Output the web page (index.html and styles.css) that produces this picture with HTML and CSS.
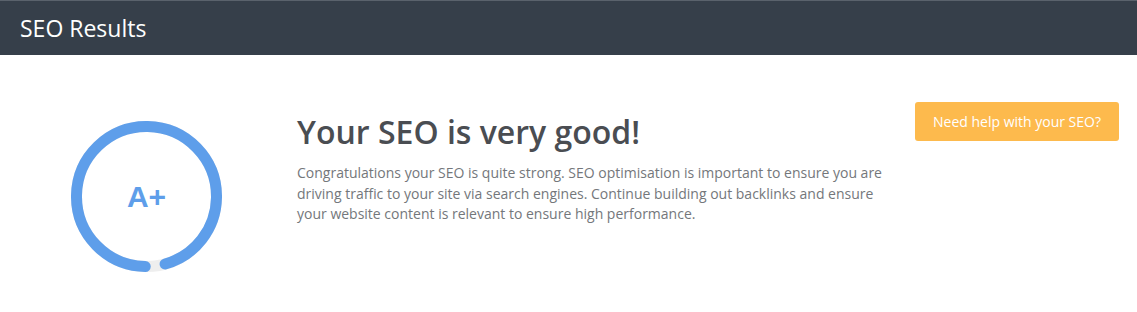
FILE: index.html
```html
<!DOCTYPE html>
<html>
<head>
    <meta charset="utf-8" />
    <title>SEO Results</title>
    <link rel="stylesheet" href="styles.css">
</head>
<body>
    <header class="topBar">
        <h1 class="topTitle">SEO Results</h1>
    </header>
    <main class="results">
        <div class="score">
            <svg class="scoreRing" width="151" height="151" viewBox="0 0 151 151">
                <circle cx="75.5" cy="75.5" r="70" fill="none" stroke="#eeeeee" stroke-width="11" />
                <circle cx="75.5" cy="75.5" r="70" fill="none" stroke="#5e9eea" stroke-width="11"
                        stroke-linecap="round" stroke-dasharray="419 440"
                        transform="rotate(91 75.5 75.5)" />
            </svg>
            <span class="grade">A+</span>
        </div>
        <div class="summary">
            <h2 class="summaryTitle">Your SEO is very good!</h2>
            <p class="summaryText">Congratulations your SEO is quite strong. SEO optimisation is important to ensure you are driving traffic to your site via search engines. Continue building out backlinks and ensure your website content is relevant to ensure high performance.</p>
        </div>
        <button class="helpBtn">Need help with your SEO?</button>
    </main>
</body>
</html>
```
FILE: styles.css
```css
body {
    font-family: 'Open Sans', 'Noto Sans', sans-serif;
    margin: 0;
    background-color: white;
}
h1, h2, p {
    margin: 0;
}
.topBar {
    background-color: #363f4a;
    height: 55px;
    display: flex;
    align-items: center;
    padding-left: 20px;
    border-top: 1px solid #5a626c;
    box-sizing: border-box;
}
.topTitle {
    color: white;
    font-size: 23px;
    font-weight: 400;
}
.results {
    display: flex;
    flex-direction: row;
    align-items: flex-start;
    padding: 47px 18px 0 71px;
}
.score {
    position: relative;
    width: 151px;
    height: 151px;
    margin-top: 19px;
}
.scoreRing {
    display: block;
}
.grade {
    position: absolute;
    top: 0;
    left: 0;
    width: 100%;
    height: 100%;
    display: flex;
    align-items: center;
    justify-content: center;
    font-family: 'Liberation Sans', Arial, sans-serif;
    font-weight: bold;
    font-size: 30px;
    color: #5e9eea;
}
.summary {
    margin-left: 75px;
    margin-top: 11px;
    width: 600px;
}
.summaryTitle {
    font-size: 32px;
    font-weight: 600;
    color: #4a4d52;
    line-height: 38px;
    margin-bottom: 12px;
}
.summaryText {
    font-size: 14px;
    line-height: 20.5px;
    color: #74777b;
}
.helpBtn {
    margin-left: auto;
    border: none;
    border-radius: 3px;
    background-color: #fdba4d;
    color: white;
    font-family: 'Open Sans', 'Noto Sans', sans-serif;
    font-size: 14px;
    padding: 0 17px;
    height: 39px;
    width: 204px;
}
```
